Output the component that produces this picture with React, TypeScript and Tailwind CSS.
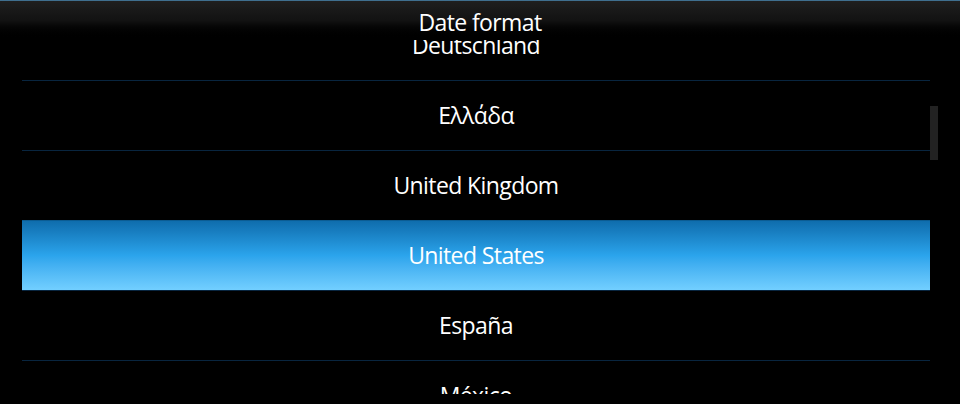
const countries = [
  "Deutschland",
  "Ελλάδα",
  "United Kingdom",
  "United States",
  "España",
  "México",
];

const selected = "United States";

export default function App() {
  return (
    <div className="flex h-[404px] w-[960px] flex-col overflow-hidden bg-black font-['Open_Sans',sans-serif] text-white">
      <header className="flex h-[40px] shrink-0 items-start justify-center border-t border-[#3f6f8f] bg-gradient-to-b from-[#1f1f1f] via-[#121212] to-black pt-[6px]">
        <h1 className="text-[23px] leading-[30px] tracking-[-0.6px]">Date format</h1>
      </header>
      <div className="relative h-[354px] shrink-0 overflow-hidden">
        <ul className="-mt-[30px] pl-[22px] pr-[30px]">
          {countries.map((name) => {
            const active = name === selected;
            return (
              <li
                key={name}
                className={
                  active
                    ? "flex h-[70px] items-center justify-center border-t border-[#0b5c93] bg-gradient-to-b from-[#0f6dad] via-[#2ba4ec] to-[#72cfff] text-[23px] tracking-[-0.6px]"
                    : "flex h-[70px] items-center justify-center border-t border-[#08253f] text-[23px] tracking-[-0.6px]"
                }
              >
                {name}
              </li>
            );
          })}
        </ul>
        <div className="absolute right-[22px] top-[66px] h-[54px] w-[8px] bg-[#222]" />
      </div>
    </div>
  );
}
